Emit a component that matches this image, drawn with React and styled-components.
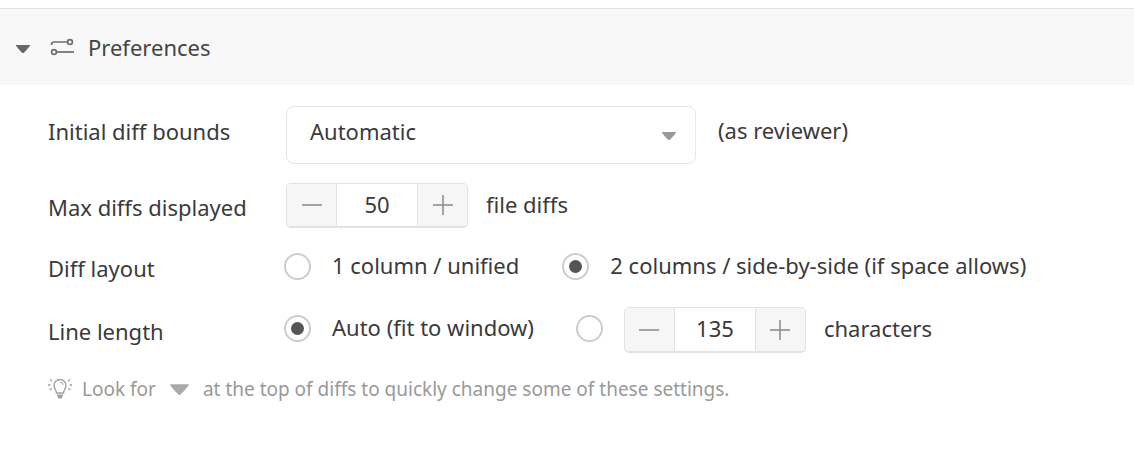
import React from "react";
import styled, { createGlobalStyle } from "styled-components";

const GlobalStyle = createGlobalStyle`
  body {
    margin: 0;
    background: #fff;
    font-family: "Noto Sans", "Open Sans", sans-serif;
    color: #3a3a3a;
  }
`;

const Caret = ({ size = 16, color = "#666" }) => (
  <CaretSvg width={size} height={size * 0.6} viewBox="0 0 16 10">
    <path d="M0.5 1.5 Q0.5 1 1 1 H15 Q15.5 1 15.5 1.5 Q13 5 9 9 Q8 10 7 9 Q3 5 0.5 1.5 Z" fill={color} />
  </CaretSvg>
);

const SlidersIcon = () => (
  <svg width="24" height="18" viewBox="0 0 24 18" fill="none" stroke="#6e6e6e" strokeWidth="1.7">
    <path d="M1.5 7 Q1.5 4 4 4 H17" />
    <circle cx="20" cy="4" r="2.4" />
    <circle cx="4" cy="14" r="2.4" />
    <path d="M7 14 H24" />
  </svg>
);

const BulbIcon = () => (
  <svg width="26" height="22" viewBox="0 0 26 22" fill="none" stroke="#a2a2a2" strokeWidth="1.4">
    <path d="M9.5 15 C9.5 12 7 11 7 7.5 A6 6 0 0 1 19 7.5 C19 11 16.5 12 16.5 15 Z" />
    <path d="M13 4 A3 3 0 0 1 16 7" strokeWidth="1" />
    <path d="M10 17.5 H16 M11 19.5 H15" strokeWidth="1.8" />
    <path d="M3 1.5 L5 3 M1 7 H3.5 M2.5 12 L5 10.5 M23 1.5 L21 3 M25 7 H22.5 M23.5 12 L21 10.5" />
  </svg>
);

const Stepper = ({ value, height }) => (
  <StepperBox $height={height}>
    <StepButton>
      <svg width="20" height="20" viewBox="0 0 20 20" stroke="#888" strokeWidth="1.5">
        <path d="M0 10 H20" />
      </svg>
    </StepButton>
    <StepValue>{value}</StepValue>
    <StepButton>
      <svg width="20" height="20" viewBox="0 0 20 20" stroke="#888" strokeWidth="1.5">
        <path d="M0 10 H20 M10 0 V20" />
      </svg>
    </StepButton>
  </StepperBox>
);

const App = () => (
  <>
    <GlobalStyle />
    <Page>
      <Header>
        <HeaderCaret>
          <Caret />
        </HeaderCaret>
        <HeaderIcon>
          <SlidersIcon />
        </HeaderIcon>
        <HeaderTitle>Preferences</HeaderTitle>
      </Header>
      <Body>
        <Row $height={58} $top={21}>
          <Label $width={238} $shift={-4}>Initial diff bounds</Label>
          <Select>
            <SelectText>Automatic</SelectText>
            <Caret color="#999" />
          </Select>
          <Note $left={22} $shift={-5}>(as reviewer)</Note>
        </Row>
        <Row $height={45} $top={19}>
          <Label $width={238} $shift={1}>Max diffs displayed</Label>
          <Stepper value="50" height={45} />
          <Note $left={18} $shift={-2}>file diffs</Note>
        </Row>
        <Row $height={34} $top={21}>
          <Label $width={236} $shift={2}>Diff layout</Label>
          <Radio />
          <RadioLabel $gap={43} $shift={-1}>1 column / unified</RadioLabel>
          <Radio $checked />
          <RadioLabel $shift={-1}>2 columns / side-by-side (if space allows)</RadioLabel>
        </Row>
        <Row $height={46} $top={24}>
          <Label $width={236} $shift={1}>Line length</Label>
          <Radio $checked $shift={-2} />
          <RadioLabel $gap={42} $shift={-3}>Auto (fit to window)</RadioLabel>
          <Radio $shift={-2} />
          <StepperGap>
            <Stepper value="135" height={46} />
          </StepperGap>
          <Note $left={18} $shift={-2}>characters</Note>
        </Row>
        <Hint>
          <BulbIcon />
          <span>Look for</span>
          <Caret color="#aaa" size={21} />
          <span>at the top of diffs to quickly change some of these settings.</span>
        </Hint>
      </Body>
    </Page>
  </>
);
export default App;

const Page = styled.div`
  width: 1134px;
  height: 449px;
  padding-top: 8px;
  box-sizing: border-box;
  overflow: hidden;
`;

const CaretSvg = styled.svg`
  display: block;
  flex: none;
`;

const Header = styled.div`
  display: flex;
  align-items: center;
  height: 76px;
  padding-left: 15px;
  border-top: 1px solid #e2e2e2;
  background: #f8f8f8;
`;

const HeaderCaret = styled.div`
  margin-top: 4px;
`;

const HeaderIcon = styled.div`
  display: flex;
  margin-left: 19px;
`;

const HeaderTitle = styled.div`
  margin-left: 14px;
  font-size: 22px;
  color: #444;
`;

const Body = styled.div`
  padding-left: 48px;
`;

const Row = styled.div`
  display: flex;
  align-items: center;
  height: ${(p) => p.$height}px;
  margin-top: ${(p) => p.$top}px;
  font-size: 22px;
  white-space: nowrap;
`;

const Label = styled.div`
  flex: none;
  width: ${(p) => p.$width}px;
  margin-top: ${(p) => (p.$shift || 0) * 2}px;
`;

const Select = styled.div`
  display: flex;
  align-items: center;
  justify-content: space-between;
  box-sizing: border-box;
  width: 410px;
  height: 58px;
  padding: 0 18px 0 23px;
  border: 1px solid #e6e6e6;
  border-radius: 8px;
  background: #fff;

  svg {
    margin-top: 2px;
  }
`;

const SelectText = styled.span`
  margin-top: -8px;
`;

const Note = styled.div`
  margin-left: ${(p) => p.$left}px;
  margin-top: ${(p) => (p.$shift || 0) * 2}px;
`;

const StepperBox = styled.div`
  display: flex;
  box-sizing: border-box;
  height: ${(p) => p.$height}px;
  border: 1px solid #e2e2e2;
  border-bottom-width: 2px;
  border-radius: 5px;
  overflow: hidden;
`;

const StepButton = styled.div`
  display: flex;
  align-items: center;
  justify-content: center;
  width: 49px;
  background: #f6f6f6;
`;

const StepValue = styled.div`
  display: flex;
  align-items: center;
  justify-content: center;
  box-sizing: border-box;
  width: 82px;
  padding-bottom: 3px;
  border-left: 1px solid #e2e2e2;
  border-right: 1px solid #e2e2e2;
  background: #fff;
`;

const Radio = styled.div`
  display: flex;
  align-items: center;
  justify-content: center;
  flex: none;
  box-sizing: border-box;
  width: 27px;
  height: 27px;
  margin-top: ${(p) => (p.$shift || 0) * 2}px;
  border: 2px solid #ccc;
  border-radius: 50%;
  background: #fff;

  &::after {
    content: "";
    display: ${(p) => (p.$checked ? "block" : "none")};
    width: 13px;
    height: 13px;
    border-radius: 50%;
    background: #555;
  }
`;

const RadioLabel = styled.div`
  margin-left: 21px;
  margin-right: ${(p) => p.$gap || 0}px;
  margin-top: ${(p) => (p.$shift || 0) * 2}px;
`;

const StepperGap = styled.div`
  margin-left: 21px;
`;

const Hint = styled.div`
  display: flex;
  align-items: center;
  gap: 9px;
  margin-top: 23px;
  margin-left: -1px;
  font-size: 19px;
  color: #999;
  white-space: nowrap;

  svg:nth-of-type(2) {
    margin: 0 4px 0 4px;
  }
`;
